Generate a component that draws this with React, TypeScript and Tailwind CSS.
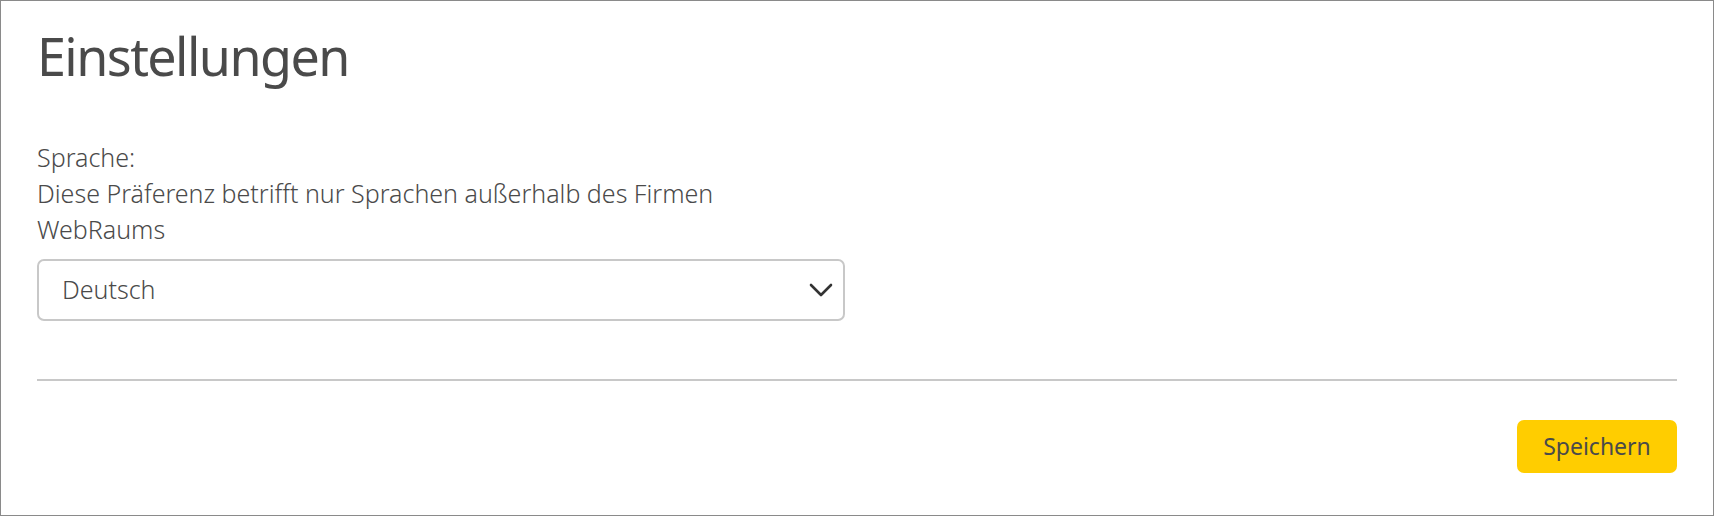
import React, { useState } from 'react';

const font = { fontFamily: '"Noto Sans", "Open Sans", Arial, sans-serif' };

function Chevron() {
  return (
    <svg width="24" height="15" viewBox="0 0 24 15" fill="none" className="shrink-0">
      <path d="M2 2 L12 12 L22 2" stroke="#333333" strokeWidth="2.6" strokeLinecap="round" strokeLinejoin="round" />
    </svg>
  );
}

export default function App() {
  const [lang] = useState('Deutsch');

  return (
    <div
      className="w-[1714px] h-[516px] border border-[#8a8a8a] bg-white pt-[25px] px-[36px] text-[#4a4a4a] flex flex-col"
      style={font}
    >
      {/* Header */}
      <h1 className="text-[52px] leading-[60px] tracking-[-0.03em] font-normal text-[#4a4a4a]">
        Einstellungen
      </h1>

      {/* Language preference */}
      <div className="mt-[53px] w-[808px]">
        <div className="text-[25px] leading-[36px] font-light">Sprache:</div>
        <p className="max-w-[740px] text-[25px] leading-[36px] font-light">
          Diese Präferenz betrifft nur Sprachen außerhalb des Firmen WebRaums
        </p>
        <button className="mt-[12px] w-[808px] h-[62px] border-2 border-[#c8c8c8] rounded-[7px] pl-[23px] pr-[10px] flex items-center justify-between">
          <span className="text-[25px] font-light text-[#4a4a4a]">{lang}</span>
          <Chevron />
        </button>
      </div>

      <div className="mt-[58px] h-[2px] bg-[#c8c8c8]" />

      <div className="mt-[39px] flex justify-end">
        <button className="w-[160px] h-[53px] rounded-[7px] bg-[#ffcd00] text-[23px] text-[#4a4a4a] flex items-center justify-center">
          Speichern
        </button>
      </div>
    </div>
  );
}
